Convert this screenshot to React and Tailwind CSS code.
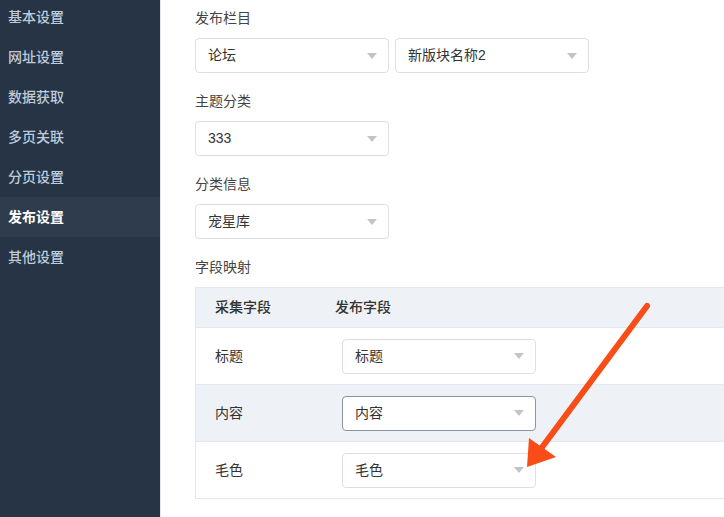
import React from 'react'

const menu = ['基本设置', '网址设置', '数据获取', '多页关联', '分页设置', '发布设置', '其他设置']

const Select = ({ value, active, className = '' }) => (
  <div
    className={`flex h-[35px] w-[194px] items-center justify-between rounded-[4px] border bg-white pl-3 pr-[11px] ${
      active ? 'border-[#8a94a4]' : 'border-[#dcdfe6]'
    } ${className}`}
  >
    <span className="text-[14px] text-[#333]">{value}</span>
    <span className="h-0 w-0 border-x-[5px] border-t-[6px] border-x-transparent border-t-[#c0c4cc]" />
  </div>
)

const Field = ({ label, children }) => (
  <div>
    <div className="mb-[10px] text-[14px] leading-5 text-[#444]">{label}</div>
    {children}
  </div>
)

export default function App() {
  const rows = [
    { src: '标题', dst: '标题' },
    { src: '内容', dst: '内容', active: true },
    { src: '毛色', dst: '毛色' },
  ]

  return (
    <div
      className="relative flex h-[517px] w-[724px] overflow-hidden bg-white"
      style={{ fontFamily: '"Liberation Sans", "Noto Sans CJK SC", sans-serif' }}
    >
      {/* Sidebar */}
      <aside className="w-[160px] shrink-0 bg-[#263445]">
        <ul className="-mt-[3px]">
          {menu.map((m) => (
            <li
              key={m}
              className={`flex h-10 items-center pl-2 text-[14px] ${
                m === '发布设置' ? 'bg-[#2f3c4d] font-bold text-white' : 'font-medium text-[#bfcbd9]'
              }`}
            >
              {m}
            </li>
          ))}
        </ul>
      </aside>

      {/* Main */}
      <main className="flex-1 border-l border-[#e4e7ed] pl-[34px] pt-2">
        <div className="flex flex-col gap-[18px]">
          <Field label="发布栏目">
            <div className="flex gap-[6px]">
              <Select value="论坛" />
              <Select value="新版块名称2" />
            </div>
          </Field>
          <Field label="主题分类">
            <Select value="333" />
          </Field>
          <Field label="分类信息">
            <Select value="宠星库" />
          </Field>
          <Field label="字段映射">
            <div className="w-[560px] border border-[#e4e7ed]">
              <div className="flex h-[39px] items-center bg-[#eef1f6] text-[14px] font-medium text-[#333]">
                <div className="w-[139px] pl-[19px]">采集字段</div>
                <div>发布字段</div>
              </div>
              {rows.map((r, i) => (
                <div
                  key={r.src}
                  className={`flex h-[57px] items-center border-t border-[#e4e7ed] text-[14px] text-[#333] ${
                    i === 1 ? 'bg-[#eef1f6]' : 'bg-white'
                  }`}
                >
                  <div className="w-[146px] pl-[19px]">{r.src}</div>
                  <Select value={r.dst} active={r.active} />
                </div>
              ))}
            </div>
          </Field>
        </div>
      </main>

      {/* Annotation arrow */}
      <svg className="pointer-events-none absolute left-0 top-0" width="724" height="517">
        <line x1="647" y1="306" x2="540" y2="450" stroke="#f84d17" strokeWidth="6" strokeLinecap="round" />
        <polygon points="527,467 529,438 556,457" fill="#f84d17" />
      </svg>
    </div>
  )
}
